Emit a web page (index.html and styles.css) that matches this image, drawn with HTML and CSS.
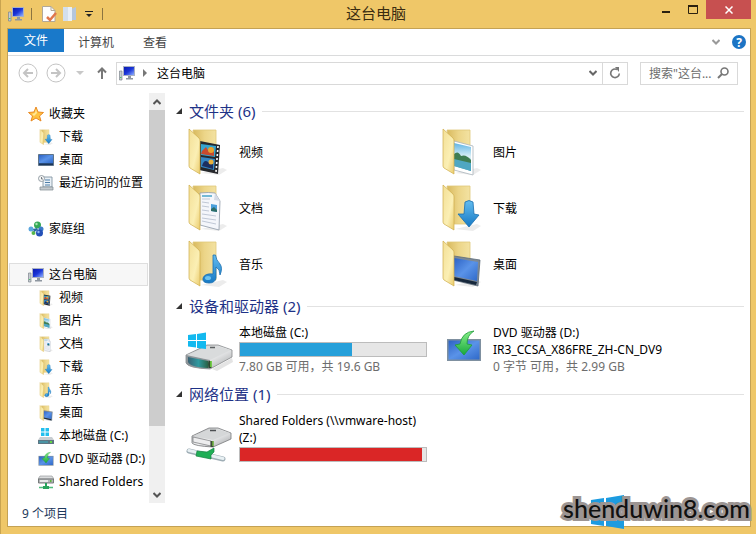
FILE: index.html
```html
<!DOCTYPE html>
<html lang="zh-CN">
<head>
<meta charset="utf-8">
<title>这台电脑</title>
<link rel="stylesheet" href="styles.css">
</head>
<body>

<!-- icon shapes -->
<svg class="defs" width="0" height="0" aria-hidden="true">
  <defs>
    <linearGradient id="leaf" x1="0" y1="0" x2="1" y2="1"><stop offset="0" stop-color="#f3df96"/><stop offset="0.6" stop-color="#fbefb4"/><stop offset="1" stop-color="#eacb6c"/></linearGradient>
    <linearGradient id="back" x1="0" y1="0" x2="1" y2="0"><stop offset="0" stop-color="#d8b95e"/><stop offset="0.5" stop-color="#ecd588"/><stop offset="1" stop-color="#f3e2a2"/></linearGradient>
    <linearGradient id="blue" x1="0" y1="0" x2="0" y2="1"><stop offset="0" stop-color="#63bdf0"/><stop offset="1" stop-color="#1679c4"/></linearGradient>
    <linearGradient id="screen" x1="0" y1="0" x2="1" y2="1"><stop offset="0" stop-color="#2c62c4"/><stop offset="0.5" stop-color="#5a93e8"/><stop offset="1" stop-color="#2f69c9"/></linearGradient>
    <linearGradient id="pcscreen" x1="0" y1="0" x2="1" y2="1"><stop offset="0" stop-color="#0b1bb0"/><stop offset="0.5" stop-color="#1a35d8"/><stop offset="1" stop-color="#8fb0ff"/></linearGradient>
    <linearGradient id="metal" x1="0" y1="0" x2="1" y2="1"><stop offset="0" stop-color="#a9abad"/><stop offset="0.5" stop-color="#f0f1f2"/><stop offset="1" stop-color="#9d9fa1"/></linearGradient>
    <linearGradient id="teal" x1="0" y1="0" x2="1" y2="0"><stop offset="0" stop-color="#3a6173"/><stop offset="0.5" stop-color="#2f9aa0"/><stop offset="1" stop-color="#2a5b3c"/></linearGradient>
    <linearGradient id="green" x1="0" y1="0" x2="0" y2="1"><stop offset="0" stop-color="#8af08a"/><stop offset="1" stop-color="#17a83c"/></linearGradient>
    <linearGradient id="sky" x1="0" y1="0" x2="0" y2="1"><stop offset="0" stop-color="#5fb4e4"/><stop offset="0.5" stop-color="#dff2f8"/><stop offset="1" stop-color="#3d8fae"/></linearGradient>

    <g id="folder-back">
      <path d="M16 45 L38 40 L42 42 L34 47Z" fill="#ececec"/>
      <path d="M8 2H31V40H12Z" fill="url(#back)" stroke="#e0c878" stroke-width="0.8"/>
    </g>
    <path id="folder-front" d="M4 1 L14 10 Q15 11 15 13 V46 L5 40 Q4 39 4 38Z" fill="url(#leaf)" stroke="#cfae4c" stroke-width="0.7"/>

    <g id="videos">
      <use href="#folder-back"/>
      <path d="M15 13 L35 17 L33 46 L14 42Z" fill="#26282c"/>
      <path d="M16 16 L31 18 L30 29 L16 27Z" fill="#35a5cf"/>
      <path d="M16 29 L30 31 L29 42 L16 39Z" fill="#3486c4"/>
      <path d="M17 23 L21 19 L24 24 L29 23 V28 L16 26Z" fill="#c84a2e"/>
      <circle cx="26" cy="22" r="3" fill="#e7a32f"/>
      <path d="M17 38 Q19 31 23 34 L28 36 V41Z" fill="#1c2f60"/>
      <circle cx="26" cy="34" r="2.500" fill="#eab13b"/>
      <path d="M33 18 L31 44" stroke="#fff" stroke-width="1.600" stroke-dasharray="2 2"/>
      <use href="#folder-front"/>
    </g>
    <g id="pictures">
      <use href="#folder-back"/>
      <path d="M15 13 L34 18 V47 L15 42Z" fill="#fff" stroke="#a9b4bb" stroke-width="0.8"/>
      <path d="M15 15 L32 19 V43 L15 38Z" fill="url(#sky)"/>
      <path d="M15 26 Q19 22 22 28 Q27 26 32 32 V36 L15 32Z" fill="#3f7d52"/>
      <path d="M15 31 L32 35 V43 L15 38Z" fill="#4fa7c2"/>
      <use href="#folder-front"/>
    </g>
    <g id="documents">
      <use href="#folder-back"/>
      <path d="M15 9 Q24 8 30 9 L35 17 L34 46 L15 41Z" fill="#f4f6fb" stroke="#8e99a8" stroke-width="0.8"/>
      <path d="M30 9 L29 16 L35 17Z" fill="#d4dae6"/>
      <path d="M17 15L25 15M17 18L24 19M17 22L24 23M17 26L24 27M17 30L31 32M17 34L31 36M17 37L31 40" stroke="#c0c8d6" stroke-width="1"/>
      <path d="M17 12H27" stroke="#49a3c8" stroke-width="1.500"/>
      <path d="M26 20L32 21V28L26 27Z" fill="#4a9fdc"/>
      <path d="M26 25L29 23L32 26V28L26 27Z" fill="#2e6d67"/>
      <use href="#folder-front"/>
    </g>
    <g id="downloads">
      <use href="#folder-back"/>
      <use href="#folder-front"/>
      <path d="M26 18 Q30 15 34 18 L35 30 L40 31 L30 43 L19 30 L25 30Z" fill="url(#blue)" stroke="#1b6fae" stroke-width="0.8"/>
    </g>
    <g id="music">
      <use href="#folder-back"/>
      <use href="#folder-front"/>
      <path d="M28 15 H30.500 Q31 20 35 24 Q38 28 35 35 Q35 29 31 27 V38 Q30 43 24 43 Q17 43 18 38 Q20 33 28 34Z" fill="url(#blue)" stroke="#1c6eb0" stroke-width="0.800"/>
      <ellipse cx="23" cy="38" rx="3" ry="2" fill="#6cc3f0"/>
    </g>
    <g id="desktop-folder">
      <use href="#folder-back"/>
      <path d="M15 16 L41 20 L39 46 L14 40Z" fill="#7d8995" stroke="#5d6b78" stroke-width="0.8"/>
      <path d="M15 18 L39 22 L38 41 L15 36Z" fill="url(#screen)"/>
      <path d="M15 37 L38 42 L37 45 L15 40Z" fill="#17283c"/>
      <use href="#folder-front"/>
    </g>
    <g id="winlogo" fill="#13b9ef">
      <path d="M3 9L11 8V14H3Z"/><path d="M12 8L21 6.500V14H12Z"/>
      <path d="M3 15H11V21.500L3 20.500Z"/><path d="M12 15H21V23L12 22Z"/>
    </g>
    <g id="drive-c">
      <path d="M27 43 L47 32 L48 36 L32 45Z" fill="#e4e4e4"/>
      <path d="M1 29 L22 19 H33 L47 24 V31 L25 43 Q3 42 1 37Z" fill="url(#metal)" stroke="#85888a" stroke-width="0.800"/>
      <path d="M2 29 L23 20 H32 L46 24 L25 34Z" fill="#d9dbdc"/>
      <path d="M1 29 L25 34 V43 Q3 42 1 37Z" fill="#8d9498"/>
      <path d="M3 31 L23 35 Q25 38 23 42 Q5 41 3 36Z" fill="url(#teal)"/>
      <path d="M25 35V42" stroke="#2e4530" stroke-width="3"/>
      <path d="M26 35V41" stroke="#74e03c" stroke-width="1.500"/>
      <path d="M25 21.500H30" stroke="#5c6063" stroke-width="1.500"/>
      <use href="#winlogo"/>
    </g>
    <g id="dvd">
      <path d="M8 13H42V35H8Z" fill="#7f90a0"/>
      <path d="M9.500 14.500H40.500V33.500H9.500Z" fill="url(#screen)"/>
      <path d="M35 5 Q23 6 21 18 L16 19 L25 29 L33 19 L28 18 Q28 9 35 5Z" fill="url(#green)" stroke="#1f9a3a" stroke-width="0.800"/>
    </g>
    <g id="drive-net">
      <path d="M7 22 L24 14 H33 L46 19 V25 L28 33 Q9 32 7 29Z" fill="url(#metal)" stroke="#77797b" stroke-width="0.800"/>
      <path d="M8 22 L25 15 H32 L45 19 L28 26Z" fill="#d5d7d8"/>
      <path d="M8 23 L26 27 V32 L8 28Z" fill="#ededee" stroke="#77797b" stroke-width="0.700"/>
      <path d="M27 27V33" stroke="#3c4a38" stroke-width="3"/>
      <path d="M28 27V32" stroke="#7cd23f" stroke-width="1.200"/>
      <path d="M25 16.500H31" stroke="#4c4f52" stroke-width="1.500"/>
      <path d="M4 37L38 45" stroke="#9faeb6" stroke-width="5" stroke-linecap="round"/>
      <path d="M4 36.500L38 44.500" stroke="#e8f0f3" stroke-width="3" stroke-linecap="round"/>
      <path d="M12 37 L22 38 L29 34 V38 L26 41 V45 L11 42Z" fill="#1fae56" stroke="#168342" stroke-width="0.700"/>
    </g>

    <g id="pc">
      <path d="M0.500 6H3V15H0.500Z" fill="#c7ccd2" stroke="#7c848c" stroke-width="0.700"/>
      <path d="M1 12H2.500V13H1Z" fill="#4fc46a"/>
      <path d="M4 1H16V11H4Z" fill="#aab2c4"/>
      <path d="M5 2H15V10H5Z" fill="url(#pcscreen)"/>
      <path d="M9 11H12V13H14V14.500H7V13H9Z" fill="#8e96a0"/>
    </g>
    <g id="star">
      <path d="M8 1 L10 6 L15.500 6.500 L11.500 10 L13 15 L8 12 L3 15 L4.500 10 L0.500 6.500 L6 6Z" fill="#ffc23f" stroke="#e98a24" stroke-width="1"/>
      <path d="M8 3L9 7L6 10L4 8L7 7Z" fill="#ffe99a"/>
    </g>
    <g id="desktop">
      <path d="M0.500 2.500H15.500V13.500H0.500Z" fill="#34659c" stroke="#5f7489" stroke-width="1"/>
      <path d="M1 3H15V11H1Z" fill="url(#screen)"/>
      <path d="M1 11.500H15V13H1Z" fill="#1c3558"/>
    </g>
    <g id="recent">
      <path d="M5 2H14V12H5Z" fill="#e9f0f6" stroke="#8495a3" stroke-width="0.900"/>
      <path d="M7 5H12M7 7.500H12M7 10H12" stroke="#4f7ea8" stroke-width="1"/>
      <path d="M2 12H15V15H2Z" fill="#c3c9ce" stroke="#80898f" stroke-width="0.700"/>
      <circle cx="3.500" cy="3.500" r="3" fill="#f5f5f5" stroke="#8b969e" stroke-width="0.900"/>
      <path d="M3.500 2V4H5" fill="none" stroke="#5c656c" stroke-width="0.800"/>
    </g>
    <g id="homegroup">
      <circle cx="3" cy="8" r="2.500" fill="#5aa6de"/><circle cx="9.500" cy="4" r="3.500" fill="#35a857"/>
      <circle cx="13" cy="8" r="2.500" fill="#3c7cc8"/><circle cx="5.500" cy="12" r="2" fill="#57b64b"/>
      <circle cx="11.500" cy="12" r="3.500" fill="#2450b8"/>
      <circle cx="8.500" cy="3" r="1.200" fill="#a7e7ae"/><circle cx="10.500" cy="11" r="1.200" fill="#8db4f2"/>
      <path d="M5 8L9 7L10 9L6 11Z" fill="#2a6da0"/>
    </g>
    <g id="s-drive">
      <path d="M3 0H6.500V3.500H3ZM7.500 0H11V3.500H7.500ZM3 4.500H6.500V8H3ZM7.500 4.500H11V8H7.500Z" fill="#22bfee"/>
      <path d="M2 9H14L16 12H0Z" fill="#c9ced2"/>
      <path d="M0 12H16V16H0Z" fill="#5e7683"/>
      <path d="M1 13H10V15H1Z" fill="#4a94a5"/><path d="M12 13H14V15H12Z" fill="#63d845"/>
    </g>
    <g id="s-net">
      <path d="M2 2H14L16 5H0Z" fill="#dadcdd" stroke="#8b8e90" stroke-width="0.600"/>
      <path d="M0.500 5H15.500V9H0.500Z" fill="#b3b6b8" stroke="#6d7072" stroke-width="0.900"/>
      <path d="M2 6H10V8H2Z" fill="#e9eaea"/><path d="M12 6H13.500V8H12Z" fill="#5fb63d"/>
      <path d="M7 9H9V12H11V15H5V12H7Z" fill="#29a35c"/>
      <path d="M1 13.500H5M11 13.500H15" stroke="#4ebd7c" stroke-width="1.500"/>
    </g>
  </defs>
</svg>

<div class="window">

  <header class="titlebar">
    <div class="quick">
      <svg class="ico" viewBox="0 0 16 16"><use href="#pc"/></svg>
      <span class="sep"></span>
      <button aria-label="属性"><svg class="ico" viewBox="0 0 16 16"><path d="M1.500 0.500H10L14 4.500V15.500H1.500Z" fill="#fdfdfd" stroke="#b0a898"/><path d="M10 0.500V4.500H14" fill="none" stroke="#b0a898"/><path d="M6 11L9 14L15 7" fill="none" stroke="#e0764a" stroke-width="2.500"/></svg></button>
      <button aria-label="新建文件夹"><svg class="ico" viewBox="0 0 16 16"><path d="M1 1H8V15H1Z" fill="#d3dfec"/><path d="M9 3L14 1V14H9Z" fill="#b4c6dc"/><path d="M6 1H10V15H6Z" fill="#e8eff7"/></svg></button>
      <button class="more" aria-label="自定义快速访问工具栏"><svg width="8" height="8" viewBox="0 0 8 8"><path d="M0 1.500H8" stroke="#222" stroke-width="1"/><path d="M1 4H7L4 7Z" fill="#222"/></svg></button>
      <span class="sep"></span>
    </div>
    <h1>这台电脑</h1>
    <div class="controls">
      <button aria-label="最小化"><svg width="10" height="10" viewBox="0 0 10 10"><path d="M1 7H9" stroke="#2b2110" stroke-width="2"/></svg></button>
      <button aria-label="最大化"><svg width="10" height="10" viewBox="0 0 10 10"><path d="M0.500 1H9.500V8.500H0.500Z" fill="none" stroke="#2b2110"/><path d="M0 1H10" stroke="#2b2110" stroke-width="2"/></svg></button>
      <button class="close" aria-label="关闭"><svg width="8" height="8" viewBox="0 0 8 8"><path d="M0.500 0.500L7.500 7.500M7.500 0.500L0.500 7.500" stroke="#fff" stroke-width="1.500"/></svg></button>
    </div>
  </header>

  <div class="frame">
    <nav class="ribbon">
      <button class="tab file">文件</button>
      <button class="tab">计算机</button>
      <button class="tab">查看</button>
      <span class="spacer"></span>
      <button aria-label="展开功能区"><svg width="8" height="6" viewBox="0 0 8 6"><path d="M0.500 1L4 4.500L7.500 1" fill="none" stroke="#999" stroke-width="2"/></svg></button>
      <button class="help" aria-label="帮助">?</button>
    </nav>

    <div class="navbar">
      <button aria-label="后退"><svg width="20" height="20" viewBox="0 0 20 20" fill="none" stroke="#c4c4c4"><circle cx="10" cy="10" r="9"/><path d="M15 10H6M10 6L6 10L10 14" stroke-width="2"/></svg></button>
      <button class="forward" aria-label="前进"><svg width="20" height="20" viewBox="0 0 20 20" fill="none" stroke="#c4c4c4"><circle cx="10" cy="10" r="9"/><path d="M5 10H14M10 6L14 10L10 14" stroke-width="2"/></svg></button>
      <button class="history" aria-label="最近浏览的位置"><svg width="8" height="4" viewBox="0 0 8 4"><path d="M0 0H8L4 4Z" fill="#c8c8c8"/></svg></button>
      <button class="up" aria-label="向上"><svg width="10" height="12" viewBox="0 0 10 12"><path d="M5 12V2M1 5.500L5 1.500L9 5.500" fill="none" stroke="#777" stroke-width="2"/></svg></button>
      <div class="address">
        <svg class="ico" viewBox="0 0 16 16"><use href="#pc"/></svg>
        <svg class="arrow" width="4" height="8" viewBox="0 0 4 8"><path d="M0 0L4 4L0 8Z" fill="#777"/></svg>
        <a href="#">这台电脑</a>
        <span class="spacer"></span>
        <button aria-label="以前的位置"><svg width="8" height="6" viewBox="0 0 8 6"><path d="M0.500 1L4 4.500L7.500 1" fill="none" stroke="#666" stroke-width="2"/></svg></button>
        <button class="refresh" aria-label="刷新"><svg width="12" height="12" viewBox="0 0 12 12"><path d="M8 2.500A4.300 4.300 0 1 0 10.300 6.500" fill="none" stroke="#777" stroke-width="1.600"/><path d="M6 0H10V5Z" fill="#777"/></svg></button>
      </div>
      <label class="search">
        <input type="text" placeholder="搜索&quot;这台..." aria-label="搜索这台电脑">
        <svg width="12" height="12" viewBox="0 0 12 12"><circle cx="7.500" cy="4.500" r="3.500" fill="none" stroke="#777" stroke-width="1.600"/><path d="M5 7L1 11" stroke="#777" stroke-width="2"/></svg>
      </label>
    </div>

    <div class="content">
      <nav class="tree">
        <a href="#"><svg class="ico" viewBox="0 0 16 16"><use href="#star"/></svg>收藏夹</a>
        <a href="#" class="sub"><svg class="ico" viewBox="2 0 40 47"><use href="#downloads"/></svg>下载</a>
        <a href="#" class="sub"><svg class="ico" viewBox="0 0 16 16"><use href="#desktop"/></svg>桌面</a>
        <a href="#" class="sub"><svg class="ico" viewBox="0 0 16 16"><use href="#recent"/></svg>最近访问的位置</a>
        <a href="#" class="group"><svg class="ico" viewBox="0 0 16 16"><use href="#homegroup"/></svg>家庭组</a>
        <a href="#" class="group selected"><svg class="ico" viewBox="0 0 16 16"><use href="#pc"/></svg>这台电脑</a>
        <a href="#" class="sub"><svg class="ico" viewBox="2 0 40 47"><use href="#videos"/></svg>视频</a>
        <a href="#" class="sub"><svg class="ico" viewBox="2 0 40 47"><use href="#pictures"/></svg>图片</a>
        <a href="#" class="sub"><svg class="ico" viewBox="2 0 40 47"><use href="#documents"/></svg>文档</a>
        <a href="#" class="sub"><svg class="ico" viewBox="2 0 40 47"><use href="#downloads"/></svg>下载</a>
        <a href="#" class="sub"><svg class="ico" viewBox="2 0 40 47"><use href="#music"/></svg>音乐</a>
        <a href="#" class="sub"><svg class="ico" viewBox="2 0 40 47"><use href="#desktop-folder"/></svg>桌面</a>
        <a href="#" class="sub"><svg class="ico" viewBox="0 0 16 16"><use href="#s-drive"/></svg>本地磁盘 (C:)</a>
        <a href="#" class="sub"><svg class="ico" viewBox="7 3 36 34"><use href="#dvd"/></svg>DVD 驱动器 (D:)</a>
        <a href="#" class="sub"><svg class="ico" viewBox="0 0 16 16"><use href="#s-net"/></svg>Shared Folders</a>
      </nav>

      <div class="scrollbar">
        <button aria-label="向上滚动"><svg width="8" height="6" viewBox="0 0 8 6"><path d="M0.500 5L4 1.500L7.500 5" fill="none" stroke="#555" stroke-width="2"/></svg></button>
        <div class="track"><div class="thumb"></div></div>
        <button aria-label="向下滚动"><svg width="8" height="6" viewBox="0 0 8 6"><path d="M0.500 1L4 4.500L7.500 1" fill="none" stroke="#555" stroke-width="2"/></svg></button>
      </div>

      <main>
        <section>
          <h2><svg width="6" height="6" viewBox="0 0 6 6"><path d="M6 0V6H0Z" fill="#333"/></svg>文件夹 (6)</h2>
          <div class="items">
            <a href="#" class="item"><svg class="big" viewBox="0 0 48 48"><use href="#videos"/></svg>视频</a>
            <a href="#" class="item"><svg class="big" viewBox="0 0 48 48"><use href="#pictures"/></svg>图片</a>
            <a href="#" class="item"><svg class="big" viewBox="0 0 48 48"><use href="#documents"/></svg>文档</a>
            <a href="#" class="item"><svg class="big" viewBox="0 0 48 48"><use href="#downloads"/></svg>下载</a>
            <a href="#" class="item"><svg class="big" viewBox="0 0 48 48"><use href="#music"/></svg>音乐</a>
            <a href="#" class="item"><svg class="big" viewBox="0 0 48 48"><use href="#desktop-folder"/></svg>桌面</a>
          </div>
        </section>

        <section>
          <h2><svg width="6" height="6" viewBox="0 0 6 6"><path d="M6 0V6H0Z" fill="#333"/></svg>设备和驱动器 (2)</h2>
          <div class="items">
            <a href="#" class="item drive">
              <svg class="big" viewBox="0 0 48 48"><use href="#drive-c"/></svg>
              <span class="info">
                <span>本地磁盘 (C:)</span>
                <progress value="60" max="100" aria-label="已用空间"></progress>
                <span class="dim">7.80 GB 可用，共 19.6 GB</span>
              </span>
            </a>
            <a href="#" class="item drive">
              <svg class="big" viewBox="0 0 48 48"><use href="#dvd"/></svg>
              <span class="info">
                <span>DVD 驱动器 (D:)</span>
                <span>IR3_CCSA_X86FRE_ZH-CN_DV9</span>
                <span class="dim">0 字节 可用，共 2.99 GB</span>
              </span>
            </a>
          </div>
        </section>

        <section>
          <h2><svg width="6" height="6" viewBox="0 0 6 6"><path d="M6 0V6H0Z" fill="#333"/></svg>网络位置 (1)</h2>
          <div class="items">
            <a href="#" class="item drive">
              <svg class="big" viewBox="0 0 48 48"><use href="#drive-net"/></svg>
              <span class="info">
                <span>Shared Folders (\\vmware-host)<br>(Z:)</span>
                <progress class="full" value="98" max="100" aria-label="已用空间"></progress>
              </span>
            </a>
          </div>
        </section>
      </main>
    </div>

    <footer class="status">9 个项目</footer>
  </div>

  <div class="watermark">
    <svg width="33" height="34" viewBox="0 0 33 34" fill="#1c9be0"><path d="M0 5L13 3V16H0ZM15 3L33 0V16H15ZM0 18H13V31L0 29ZM15 18H33V34L15 31Z"/></svg>
    <span>shenduwin8.com</span>
  </div>
</div>

</body>
</html>
```
FILE: styles.css
```css
* {
  box-sizing: border-box;
}
body {
  margin: 0;
  background-color: #efc768;
  color: #000;
  font-family: "Noto Sans", "Noto Sans CJK SC", sans-serif;
  font-size: 12px;
  line-height: 17px;
}
button {
  display: flex;
  align-items: center;
  justify-content: center;
  padding: 0;
  border: none;
  background: none;
  color: inherit;
  font: inherit;
}
a {
  color: inherit;
  text-decoration: none;
}
svg {
  display: block;
  flex: none;
}
.defs {
  position: absolute;
}
.ico {
  width: 16px;
  height: 16px;
}
.big {
  width: 48px;
  height: 48px;
}
.spacer {
  flex: 1;
}
.window {
  position: relative;
  display: flex;
  flex-direction: column;
  min-height: 100vh;
  border-left: 1px solid #c9a450;
}

/* title bar */
.titlebar {
  display: grid;
  grid-template-columns: 1fr auto 1fr;
  height: 28px;
  padding-right: 5px;
}
.quick {
  display: flex;
  align-items: center;
  gap: 5px;
  padding-left: 7px;
}
.sep {
  width: 1px;
  height: 12px;
  margin: 0 4px 0 2px;
  background-color: #8b7440;
}
.more {
  width: 12px;
}
.titlebar h1 {
  margin: 0;
  color: #3a2c10;
  font-size: 15px;
  font-weight: normal;
  line-height: 26px;
}
.controls {
  display: flex;
  justify-content: flex-end;
}
.controls button {
  width: 27px;
  height: 19px;
}
.controls .close {
  width: 45px;
  background-color: #c75050;
}

/* inner frame */
.frame {
  flex: 1;
  display: flex;
  flex-direction: column;
  margin: 0 5px 7px 6px;
  border: 1px solid #c4a254;
  background-color: #fff;
}
.ribbon {
  display: flex;
  align-items: center;
  height: 27px;
  padding-right: 4px;
  border-bottom: 1px solid #dadbdc;
  color: #444;
}
.tab {
  height: 26px;
  padding: 0 14px;
}
.file {
  align-self: flex-start;
  width: 56px;
  height: 23px;
  background-color: #1979ca;
  color: #fff;
}
.tab + .tab {
  padding-right: 15px;
}
.help {
  width: 14px;
  height: 14px;
  margin-left: 12px;
  border-radius: 50%;
  background-color: #1c74c4;
  color: #fff;
  font-weight: bold;
}

/* navigation bar */
.navbar {
  display: flex;
  align-items: center;
  height: 34px;
  padding: 0 12px 0 10px;
}
.forward {
  margin-left: 8px;
}
.history {
  margin-left: 10px;
}
.up {
  margin: 0 9px 0 13px;
}
.address {
  flex: 1;
  display: flex;
  align-items: center;
  height: 23px;
  padding-left: 2px;
  border: 1px solid #d9d9d9;
}
.arrow {
  margin: 0 10px 0 8px;
}
.refresh {
  width: 25px;
  height: 21px;
  margin-left: 5px;
  border-left: 1px solid #d9d9d9;
}
.search {
  display: flex;
  align-items: center;
  width: 98px;
  height: 23px;
  margin-left: 12px;
  padding: 0 8px;
  border: 1px solid #d9d9d9;
}
.search input {
  flex: 1;
  min-width: 0;
  padding: 0;
  border: none;
  outline: none;
  font: inherit;
}
.search input::placeholder {
  color: #6d6d6d;
}

/* tree */
.content {
  flex: 1;
  display: flex;
}
.tree {
  width: 141px;
  padding: 12px 1px 0;
  overflow: hidden;
}
.tree a {
  display: flex;
  align-items: center;
  gap: 5px;
  height: 23px;
  padding-left: 18px;
  border: 1px solid transparent;
  white-space: nowrap;
}
.tree .sub {
  padding-left: 28px;
}
.tree .group {
  margin-top: 23px;
}
.tree .selected {
  border-color: #dedede;
  background-color: #f7f7f7;
}
.scrollbar {
  display: flex;
  flex-direction: column;
  width: 16px;
  margin-top: 3px;
  background-color: #f0f0f0;
}
.scrollbar button {
  height: 17px;
}
.track {
  flex: 1;
}
.thumb {
  height: 84%;
  background-color: #cdcdcd;
}

/* folders and drives */
main {
  flex: 1;
  display: flex;
  flex-direction: column;
  gap: 6px;
  padding: 9px 6px 0 11px;
}
h2 {
  display: flex;
  align-items: center;
  gap: 7px;
  height: 24px;
  margin: 0 0 5px;
  color: #1e3287;
  font-size: 15px;
  font-weight: normal;
}
h2::after {
  content: "";
  flex: 1;
  height: 1px;
  background-color: #e2e2e2;
}
.items {
  display: grid;
  grid-template-columns: repeat(auto-fill, 254px);
  row-gap: 8px;
  padding-left: 9px;
}
.item {
  display: flex;
  align-items: center;
  gap: 6px;
}
.drive {
  min-height: 53px;
}
.info {
  display: flex;
  flex-direction: column;
  width: 188px;
}
.dim {
  color: #6d6d6d;
}
progress {
  appearance: none;
  width: 100%;
  height: 15px;
  margin: 1px 0;
  border: 1px solid #bcbcbc;
}
progress::-webkit-progress-bar {
  background-color: #e6e6e6;
}
progress::-webkit-progress-value {
  background-color: #26a0da;
}
.full::-webkit-progress-value {
  background-color: #da2626;
}

.status {
  height: 23px;
  padding-left: 14px;
  color: #1e395b;
  line-height: 21px;
}

.watermark {
  position: absolute;
  right: 6px;
  bottom: 5px;
  display: grid;
}
.watermark svg {
  grid-area: 1 / 1;
  margin-left: 28px;
}
.watermark span {
  grid-area: 1 / 1;
  color: #111;
  font-family: Lato, sans-serif;
  font-size: 25px;
  font-weight: 500;
  line-height: 26px;
  paint-order: stroke;
  -webkit-text-stroke: 6px #9c9593;
}
```
